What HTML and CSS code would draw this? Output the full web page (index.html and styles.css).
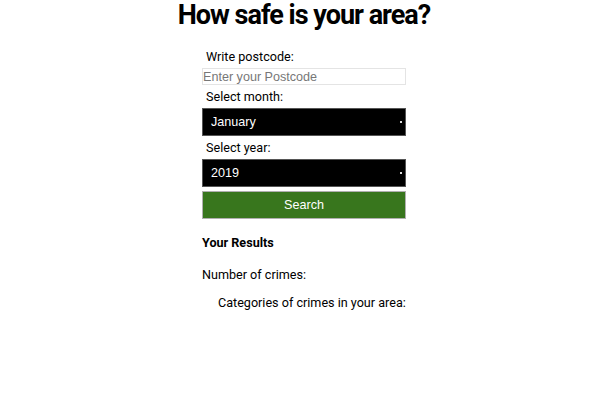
FILE: index.html
```html
<!DOCTYPE html>
<html>
<head>
<meta charset="utf-8">
<link rel="stylesheet" href="styles.css">
</head>
<body>
<h1 class="title">How safe is your area?</h1>
<div class="form-wrap">
  <form class="form">
    <label class="label">Write postcode:</label>
    <input class="input" type="text" placeholder="Enter your Postcode">
    <label class="label">Select month:</label>
    <select class="select"><option>January</option></select>
    <label class="label">Select year:</label>
    <select class="select"><option>2019</option></select>
    <button class="button" type="button">Search</button>
  </form>
  <div class="results">
    <h3 class="results-title">Your Results</h3>
    <p class="count">Number of crimes:</p>
    <p class="categories">Categories of crimes in your area:</p>
  </div>
</div>
</body>
</html>
```

FILE: styles.css
```css
body {
  margin: 0;
  font-family: Roboto, "Liberation Sans", sans-serif;
  color: #000;
  background: #fff;
}
.title {
  margin: 0;
  text-align: center;
  font-size: 27px;
  line-height: 30px;
  font-weight: 700;
  letter-spacing: -1px;
  height: 45px;
  padding-left: 8px;
  padding-bottom: 15px;
  box-sizing: border-box;
}
.form-wrap {
  width: 204px;
  margin: 0 auto;
  padding-left: 8px;
}
.form {
  display: flex;
  flex-direction: column;
}
.label {
  font-size: 12.6px;
  line-height: 23px;
  padding-left: 4px;
}
.input {
  font-family: "Liberation Sans", Arial, sans-serif;
  font-size: 12.6px;
  height: 17px;
  box-sizing: border-box;
  border: 1px solid #e4e4e4;
  padding: 0;
  margin: 0;
  outline: none;
}
.input::placeholder { color: #777; }
.select {
  -webkit-appearance: none;
  appearance: none;
  font-family: "Liberation Sans", Arial, sans-serif;
  font-size: 12.6px;
  height: 28px;
  background-color: #000;
  background-image: linear-gradient(#ddd, #ddd);
  background-repeat: no-repeat;
  background-size: 2px 2px;
  background-position: right 3px center;
  color: #fff;
  border: 1px solid #555;
  padding: 0 8px;
  margin: 0;
  border-radius: 0;
}
.button {
  font-family: "Liberation Sans", Arial, sans-serif;
  font-size: 12.6px;
  height: 28px;
  margin-top: 4px;
  background: #38761d;
  color: #fff;
  border: 1px solid #b0b0b0;
  border-radius: 0;
}
.results-title {
  font-size: 12.6px;
  font-weight: 700;
  margin: 16px 0 0;
  line-height: 16px;
}
.count {
  font-size: 12.6px;
  margin: 16px 0 0;
  line-height: 16px;
}
.categories {
  font-size: 12.6px;
  margin: 12px 0 0;
  padding-left: 16px;
  line-height: 16px;
  white-space: nowrap;
}
```
